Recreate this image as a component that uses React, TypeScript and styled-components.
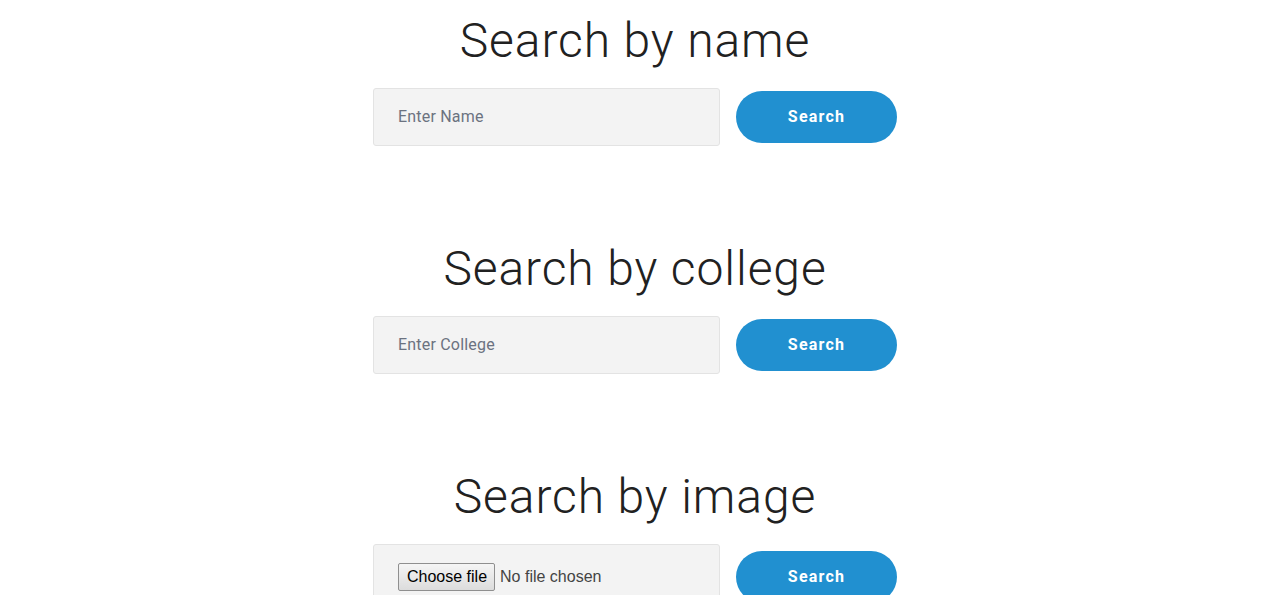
import React, { FC, useState } from 'react';
import styled, { createGlobalStyle } from 'styled-components';

const GlobalStyle = createGlobalStyle`
  html, body {
    margin: 0;
    padding: 0;
    background: #ffffff;
  }
  body {
    font-family: Roboto, "Noto Sans", sans-serif;
    color: #212529;
  }
`;

const Page = styled.main`
  display: flex;
  flex-direction: column;
  align-items: center;
  padding: 12px 4px 40px 0;
  gap: 94.5px;
`;

const Section = styled.section`
  display: flex;
  flex-direction: column;
  align-items: center;
`;

const Heading = styled.h2`
  margin: 0 0 18px;
  font-size: 48px;
  line-height: 1.2;
  font-weight: 300;
  letter-spacing: 0.9px;
  color: #212121;
`;

const Row = styled.form`
  display: flex;
  align-items: center;
  gap: 16px;
`;

const Field = styled.div<{ $padY: number }>`
  box-sizing: border-box;
  width: 347px;
  min-height: 58px;
  display: flex;
  align-items: center;
  padding: ${(p) => p.$padY}px 24px;
  background: #f3f3f3;
  border: 1px solid #e3e3e3;
  border-radius: 3px;
`;

const TextInput = styled.input`
  width: 100%;
  border: none;
  outline: none;
  background: transparent;
  padding: 0;
  font-family: Roboto, "Noto Sans", sans-serif;
  font-size: 16px;
  letter-spacing: 0.2px;
  color: #495057;
  &::placeholder {
    color: #6b7280;
  }
`;

const FilePicker = styled.label`
  display: flex;
  align-items: center;
  gap: 5px;
  font-family: "Liberation Sans", Arial, sans-serif;
  font-size: 16px;
  color: #444444;
  cursor: pointer;

  input {
    display: none;
  }
`;

const FileButton = styled.span`
  box-sizing: border-box;
  height: 28px;
  display: inline-flex;
  align-items: center;
  padding: 0 7px 0 8px;
  color: #000000;
  background: linear-gradient(#f5f5f5, #dcdcdc);
  border: 1px solid #8f8f8f;
  border-radius: 2px;
`;

const SearchButton = styled.button`
  width: 161px;
  height: 52px;
  border: none;
  border-radius: 26px;
  background: #2190d0;
  color: #ffffff;
  font-family: Roboto, "Noto Sans", sans-serif;
  font-size: 16px;
  font-weight: 700;
  letter-spacing: 1.2px;
  cursor: pointer;
`;

const SearchBlock: FC<{ title: string; padY?: number; children: React.ReactNode }> = ({
  title,
  padY = 0,
  children,
}) => (
  <Section>
    <Heading>{title}</Heading>
    <Row onSubmit={(e) => e.preventDefault()}>
      <Field $padY={padY}>{children}</Field>
      <SearchButton type="submit">Search</SearchButton>
    </Row>
  </Section>
);

const ImagePicker: FC = () => {
  const [fileName, setFileName] = useState<string>('');
  return (
    <FilePicker>
      <input
        type="file"
        accept="image/*"
        onChange={(e) => setFileName(e.target.files?.[0]?.name ?? '')}
      />
      <FileButton>Choose file</FileButton>
      <span>{fileName || 'No file chosen'}</span>
    </FilePicker>
  );
};

const App: FC = () => (
  <>
    <GlobalStyle />
    <Page>
      <SearchBlock title="Search by name">
        <TextInput type="text" placeholder="Enter Name" />
      </SearchBlock>
      <SearchBlock title="Search by college">
        <TextInput type="text" placeholder="Enter College" />
      </SearchBlock>
      <SearchBlock title="Search by image" padY={18}>
        <ImagePicker />
      </SearchBlock>
    </Page>
  </>
);

export default App;
